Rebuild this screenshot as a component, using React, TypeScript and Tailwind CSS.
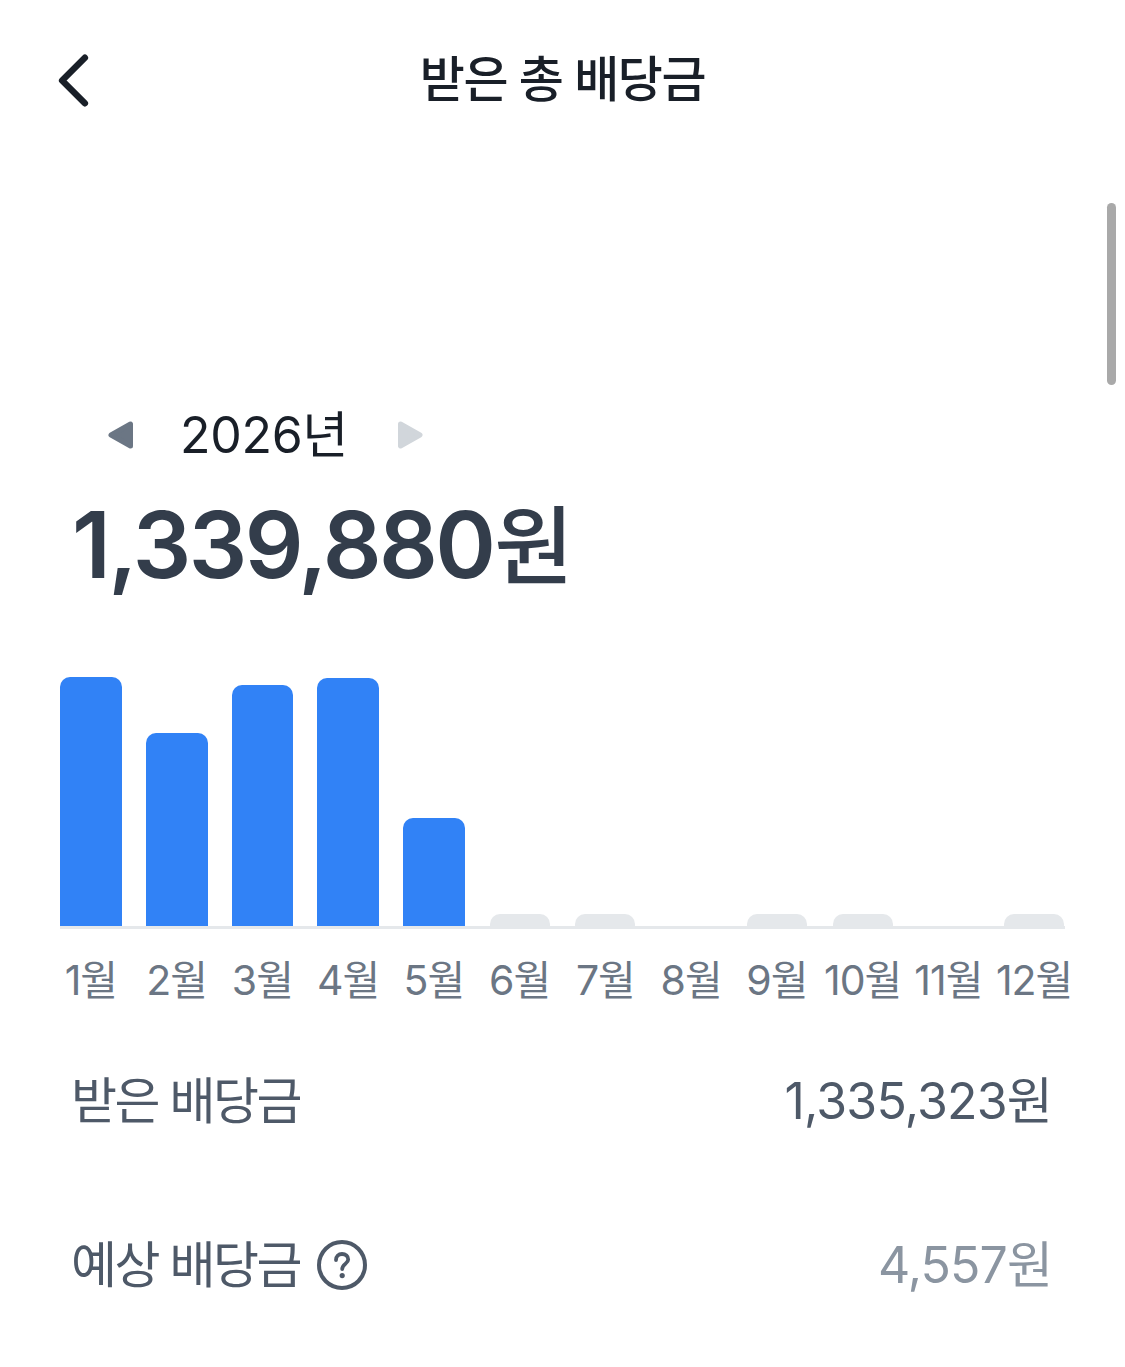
import { ChevronLeft } from 'lucide-react';

const font = "font-['Inter','Noto_Sans_CJK_KR',sans-serif]";

const months = [
  { label: '1월', height: 249, active: true },
  { label: '2월', height: 193, active: true },
  { label: '3월', height: 241, active: true },
  { label: '4월', height: 248, active: true },
  { label: '5월', height: 108, active: true },
  { label: '6월', height: 12, active: false },
  { label: '7월', height: 12, active: false },
  { label: '8월', height: 0, active: false },
  { label: '9월', height: 12, active: false },
  { label: '10월', height: 12, active: false },
  { label: '11월', height: 0, active: false },
  { label: '12월', height: 12, active: false },
];

function Triangle({ flip, color }: { flip?: boolean; color: string }) {
  return (
    <svg width="27" height="30" viewBox="0 0 27 30" className={flip ? 'rotate-180' : ''}>
      <path
        d="M23.5 4 L23.5 26 L4 15 Z"
        fill={color}
        stroke={color}
        strokeWidth="5"
        strokeLinejoin="round"
      />
    </svg>
  );
}

export default function App() {
  return (
    <div className={`relative w-[1125px] h-[1367px] bg-white overflow-hidden ${font}`}>
      <header className="relative h-[160px] flex items-center justify-center">
        <ChevronLeft
          className="absolute left-[28px] top-[35px] text-[#191f28]"
          size={91}
          strokeWidth={1.7}
        />
        <h1 className="text-[49px] leading-[60px] font-medium tracking-[-1.4px] text-[#191f28]">
          받은 총 배당금
        </h1>
      </header>

      <div className="absolute right-[9px] top-[203px] w-[9px] h-[182px] rounded-full bg-[#a9a9a9]" />

      <main className="pt-[240px]">
        <div className="flex items-center pl-[107px] h-[70px]">
          <Triangle color="#6b7684" />
          <span className="ml-[46px] mr-[49px] text-[50px] leading-[70px] tracking-[-0.3px] text-[#191f28]">
            2026년
          </span>
          <Triangle flip color="#d1d6db" />
        </div>

        <div className="pl-[72px] mt-[25px] flex items-baseline text-[92px] leading-[100px] font-semibold tracking-[-2.6px] text-[#333d4b]">
          1,339,880
          <span className="ml-[1px] text-[86px] font-medium tracking-normal">원</span>
        </div>

        <section className="mt-[80px] ml-[60px] w-[1005px]">
          <div className="grid grid-cols-12 gap-[24px] h-[252px] items-end border-b-[3px] border-[#e5e8eb]">
            {months.map((m) => (
              <div key={m.label} className="flex justify-center">
                {m.height > 0 && (
                  <div
                    className={`rounded-t-[10px] ${m.active ? 'w-full bg-[#3182f6]' : 'w-[60px] bg-[#e5e8eb]'}`}
                    style={{ height: m.height }}
                  />
                )}
              </div>
            ))}
          </div>
          <div className="grid grid-cols-12 gap-[24px] mt-[26px]">
            {months.map((m) => (
              <div
                key={m.label}
                className="min-w-0 flex justify-center whitespace-nowrap text-[41px] leading-[50px] tracking-[-1px] text-[#6b7684]"
              >
                {m.label}
              </div>
            ))}
          </div>
        </section>

        <div className="mt-[66px] pl-[71px] pr-[73px] flex items-center justify-between text-[50px] leading-[60px] text-[#4e5968]">
          <span className="tracking-[-2.5px]">받은 배당금</span>
          <span className="tracking-[-0.8px]">1,335,323원</span>
        </div>

        <div className="mt-[104px] pl-[71px] pr-[73px] flex items-center justify-between text-[50px] leading-[60px]">
          <span className="flex items-center gap-[17px] tracking-[-2.5px] text-[#4e5968]">
            예상 배당금
            <svg width="50" height="50" viewBox="0 0 50 50" fill="none">
              <circle cx="25" cy="25" r="23" stroke="#4e5968" strokeWidth="4" />
              <path
                d="M19 20 C19 16.2 21.6 14 25 14 C28.6 14 31.2 16.2 31.2 19.4 C31.2 23.8 25.2 24 25.2 29"
                stroke="#4e5968"
                strokeWidth="3.8"
                strokeLinecap="round"
              />
              <circle cx="25.2" cy="35.6" r="2.6" fill="#4e5968" />
            </svg>
          </span>
          <span className="tracking-[-0.9px] text-[#8b95a1]">4,557원</span>
        </div>
      </main>
    </div>
  );
}
